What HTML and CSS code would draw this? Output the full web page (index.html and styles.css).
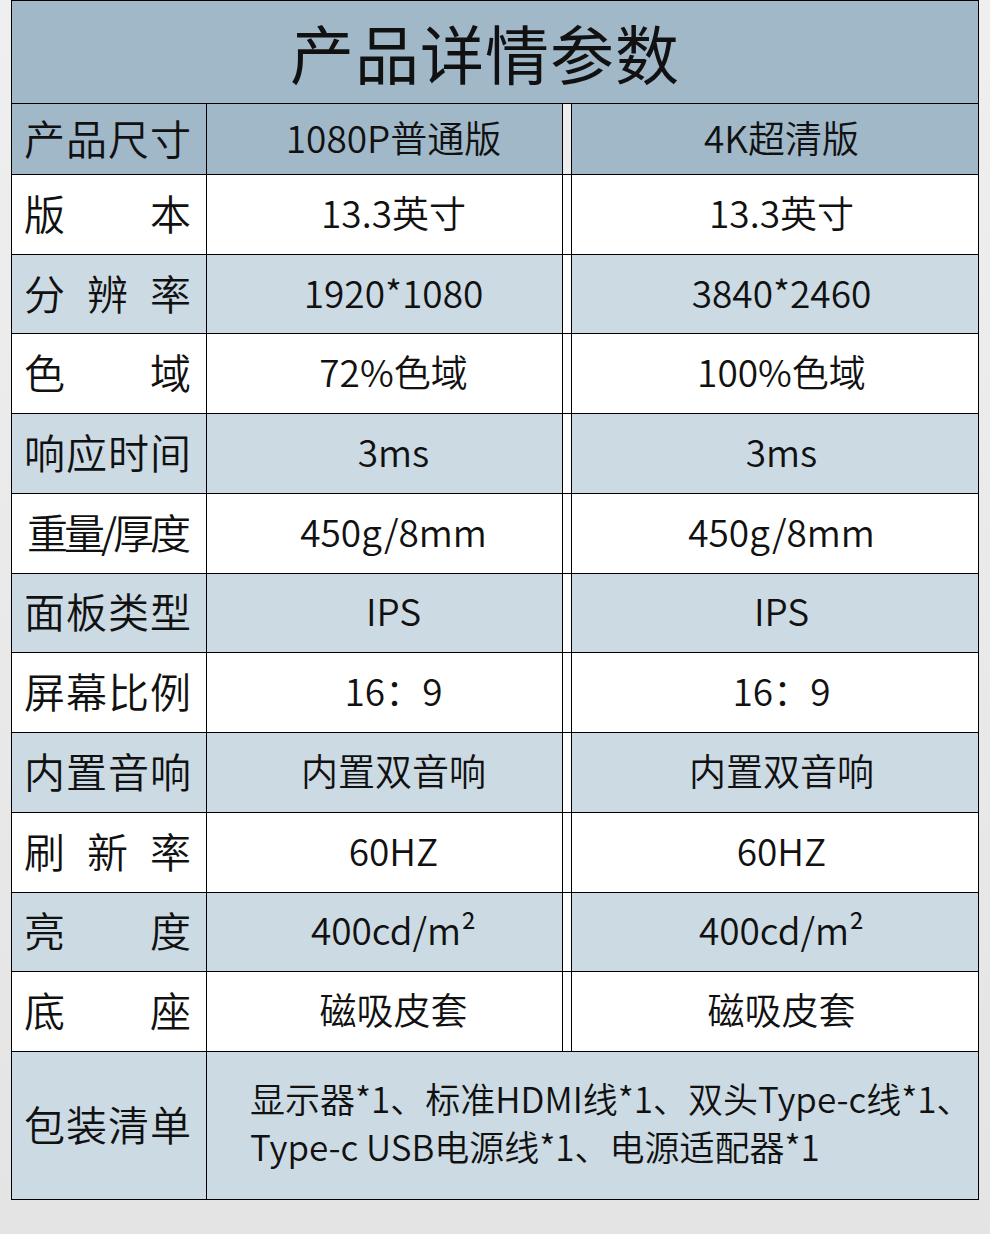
FILE: index.html
```html
<!DOCTYPE html>
<html lang="zh-CN">
<head>
<meta charset="utf-8">
<title>产品详情参数</title>
<link rel="stylesheet" href="styles.css">
</head>
<body>
<div class="table">
  <div class="title-row">产品详情参数</div>
  <div class="row head">
    <div class="label"><span>产</span><span>品</span><span>尺</span><span>寸</span></div>
    <div class="val v1">1080P普通版</div>
    <div class="gap"></div>
    <div class="val v2">4K超清版</div>
  </div>
  <div class="data">
    <div class="row w">
      <div class="label"><span>版</span><span>本</span></div>
      <div class="val v1">13.3英寸</div>
      <div class="gap"></div>
      <div class="val v2">13.3英寸</div>
    </div>
    <div class="row b">
      <div class="label"><span>分</span><span>辨</span><span>率</span></div>
      <div class="val v1">1920*1080</div>
      <div class="gap"></div>
      <div class="val v2">3840*2460</div>
    </div>
    <div class="row w">
      <div class="label"><span>色</span><span>域</span></div>
      <div class="val v1">72%色域</div>
      <div class="gap"></div>
      <div class="val v2">100%色域</div>
    </div>
    <div class="row b">
      <div class="label"><span>响</span><span>应</span><span>时</span><span>间</span></div>
      <div class="val v1">3ms</div>
      <div class="gap"></div>
      <div class="val v2">3ms</div>
    </div>
    <div class="row w">
      <div class="label"><span class="one">重量/厚度</span></div>
      <div class="val v1">450g/8mm</div>
      <div class="gap"></div>
      <div class="val v2">450g/8mm</div>
    </div>
    <div class="row b">
      <div class="label"><span>面</span><span>板</span><span>类</span><span>型</span></div>
      <div class="val v1">IPS</div>
      <div class="gap"></div>
      <div class="val v2">IPS</div>
    </div>
    <div class="row w">
      <div class="label"><span>屏</span><span>幕</span><span>比</span><span>例</span></div>
      <div class="val v1">16：9</div>
      <div class="gap"></div>
      <div class="val v2">16：9</div>
    </div>
    <div class="row b">
      <div class="label"><span>内</span><span>置</span><span>音</span><span>响</span></div>
      <div class="val v1">内置双音响</div>
      <div class="gap"></div>
      <div class="val v2">内置双音响</div>
    </div>
    <div class="row w">
      <div class="label"><span>刷</span><span>新</span><span>率</span></div>
      <div class="val v1">60HZ</div>
      <div class="gap"></div>
      <div class="val v2">60HZ</div>
    </div>
    <div class="row b">
      <div class="label"><span>亮</span><span>度</span></div>
      <div class="val v1">400cd/m²</div>
      <div class="gap"></div>
      <div class="val v2">400cd/m²</div>
    </div>
    <div class="row w">
      <div class="label"><span>底</span><span>座</span></div>
      <div class="val v1">磁吸皮套</div>
      <div class="gap"></div>
      <div class="val v2">磁吸皮套</div>
    </div>
  </div>
  <div class="row pack">
    <div class="label"><span>包</span><span>装</span><span>清</span><span>单</span></div>
    <div class="pack-val">显示器*1、标准HDMI线*1、双头Type-c线*1、<br>Type-c USB电源线*1、电源适配器*1</div>
  </div>
</div>
</body>
</html>
```

FILE: styles.css
```css
* { box-sizing: border-box; }
html, body {
  margin: 0;
  padding: 0;
}
body {
  width: 990px;
  min-height: 1234px;
  background: linear-gradient(#efefef, #e4e4e4);
  font-family: "Noto Sans CJK SC", "Noto Sans", sans-serif;
  font-weight: 350;
  color: #111;
}
.table {
  margin-left: 11px;
  width: 968px;
  border: 1px solid #000;
}
.title-row {
  height: 103px;
  border-bottom: 1px solid #000;
  background: #a0b8c8;
  display: flex;
  align-items: center;
  justify-content: center;
  padding-right: 20px;
  padding-bottom: 2px;
  font-size: 64px;
  font-weight: 400;
  letter-spacing: 1px;
}
.row {
  display: grid;
  grid-template-columns: 195px 356px 9px 406px;
  border-bottom: 1px solid #000;
}
.head {
  height: 71px;
}
.data {
  display: grid;
  grid-template-rows: repeat(11, 1fr);
  height: 877px;
}
.label {
  border-right: 1px solid #000;
  display: flex;
  align-items: center;
  justify-content: space-between;
  padding-left: 12px;
  padding-right: 15px;
  padding-bottom: 4px;
  font-size: 41px;
  line-height: 1;
  white-space: nowrap;
}
.label .one {
  letter-spacing: -4px;
  margin-left: 3px;
}
.val {
  border-right: 1px solid #000;
  display: flex;
  align-items: center;
  justify-content: center;
  padding-bottom: 4px;
  font-size: 37px;
  line-height: 1;
  white-space: nowrap;
}
.head .val { font-size: 37px; }
.v1 { padding-left: 18px; }
.v2 { padding-left: 13px; border-right: none; }
.gap {
  border-right: 1px solid #000;
  background: #fff;
}
.head .label, .head .val { background: #a0b8c8; }
.head .gap { background: transparent; }
.w .label, .w .val { background: #fff; }
.b .label, .b .val { background: #ccdae3; }
.pack {
  height: 147px;
  border-bottom: none;
  grid-template-columns: 195px 771px;
}
.pack .label {
  background: #ccdae3;
}
.pack-val {
  background: #ccdae3;
  display: flex;
  align-items: center;
  padding-left: 43px;
  padding-bottom: 8px;
  font-size: 35px;
  line-height: 48px;
  white-space: nowrap;
}
```
